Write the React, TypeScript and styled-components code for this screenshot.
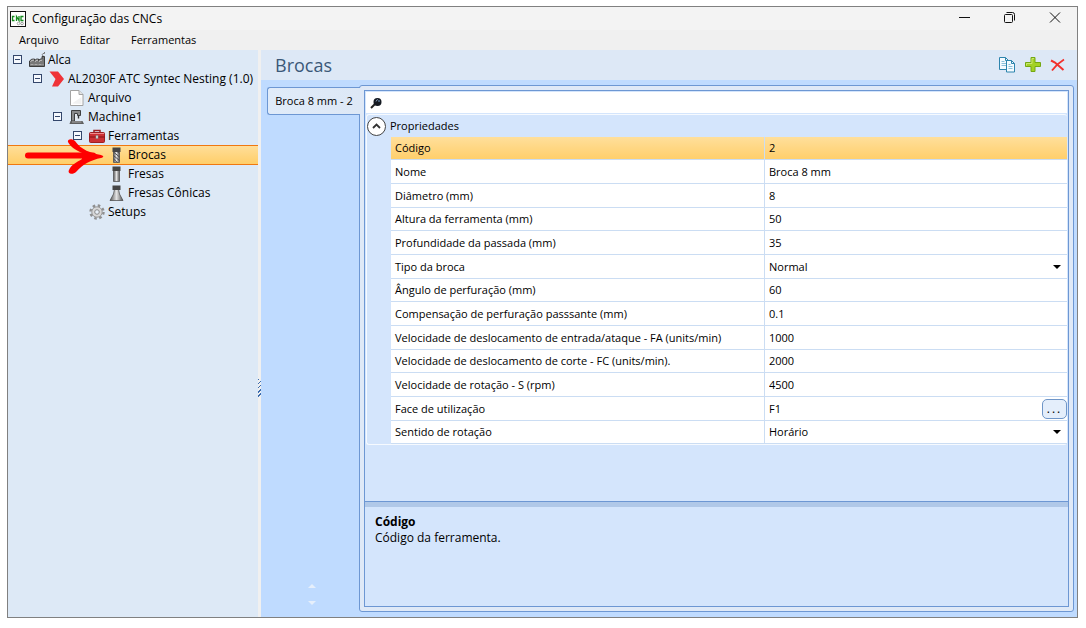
import React, { useState } from "react";
import styled, { createGlobalStyle, css } from "styled-components";

const line = "#6d97d3";
const gridLine = "#cbddf3";
const highlight = "linear-gradient(#ffdf9b, #ffce69)";

const GlobalStyle = createGlobalStyle`
  * { box-sizing: border-box; }
  body {
    margin: 0;
    background: #fff;
    color: #000;
    font: 12px/16px "Open Sans", "Noto Sans", sans-serif;
  }
  button, input, select { font: inherit; color: inherit; }
  button { padding: 0; border: 0; background: none; }
  svg { display: block; flex: none; }
`;

const Page = styled.div`
  display: flex;
  min-height: 100vh;
  padding: 6px 8px 10px 7px;
`;

const Window = styled.div`
  flex: 1;
  display: flex;
  flex-direction: column;
  min-width: 0;
  border: 1px solid #808080;
  background: #f0f0f0;
`;

const TitleBar = styled.header`
  display: flex;
  align-items: center;
  height: 23px;
  padding: 0 16px 0 2px;
  gap: 6px;
  background: #f3f3f3;
`;

const WindowTitle = styled.h1`
  flex: 1;
  margin: 0;
  font-size: 12px;
  font-weight: 400;
`;

const WindowControls = styled.div`
  display: flex;
  gap: 34px;
  margin-top: -2px;
`;

const MenuBar = styled.nav`
  display: flex;
  height: 20px;
  padding: 0 11px;
  gap: 21px;
  font-size: 11px;
`;

const Body = styled.div`
  flex: 1;
  display: flex;
  min-height: 0;
`;

const Sidebar = styled.aside`
  position: relative;
  flex: none;
  width: 250px;
  background: #dde9f6;
`;

const Tree = styled.ul`
  margin: 0;
  padding: 0;
  list-style: none;
`;

const TreeRow = styled.li<{ $level: number; $selected?: boolean }>`
  display: flex;
  align-items: center;
  height: 19px;
  padding-left: ${(p) => 5 + p.$level * 20}px;
  white-space: nowrap;
  ${(p) =>
    p.$selected &&
    css`
      background: ${highlight};
      box-shadow: inset 0 1px #f07810, 0 1px #f07810;
    `}
`;

const Toggle = styled.button`
  width: 9px;
  height: 9px;
  border: 1px solid #33466b;
  background: linear-gradient(#33466b, #33466b) center / 5px 1px no-repeat #f4f8fd;
`;

const TogglePlaceholder = styled.span`
  width: 9px;
`;

const TreeIcon = styled.span`
  flex: none;
  width: 16px;
  margin: 0 3px 0 7px;
`;

const Pointer = styled.svg`
  position: absolute;
  left: 15px;
  top: 86px;
  pointer-events: none;
`;

const Splitter = styled.div`
  flex: none;
  width: 3px;
  display: flex;
  align-items: center;

  &::after {
    content: "";
    width: 3px;
    height: 18px;
    margin-top: 108px;
    background: repeating-linear-gradient(135deg, #3c6cae 0 1px, #f0f0f0 1px 3px);
  }
`;

const Content = styled.main`
  flex: 1;
  display: flex;
  flex-direction: column;
  min-width: 0;
  background: #bfdbff;
`;

const ContentHeader = styled.div`
  display: flex;
  align-items: center;
  justify-content: space-between;
  height: 30px;
  padding: 0 12px 0 14px;
  background: #dde8f6;
`;

const ContentTitle = styled.h2`
  margin: 0;
  font-size: 18px;
  line-height: 24px;
  font-weight: 400;
  color: #3b5878;
`;

const Actions = styled.div`
  display: flex;
  align-items: center;
  gap: 9px;
`;

const TabArea = styled.div`
  flex: 1;
  display: flex;
  padding: 5px 3px 5px 6px;
`;

const TabStrip = styled.div`
  flex: none;
  display: flex;
  flex-direction: column;
  justify-content: space-between;
  width: 93px;
  margin-right: -1px;
  padding: 2px 0 7px;
  z-index: 1;
`;

const Tab = styled.button`
  height: 28px;
  border: 1px solid ${line};
  border-right: 0;
  border-radius: 3px 0 0 3px;
  background: linear-gradient(90deg, #e0ebf9, #dde8f6);
  font-size: 11px;
  white-space: nowrap;
`;

const TabScroll = styled.div`
  display: flex;
  flex-direction: column;
  align-items: center;
  gap: 13px;
  padding-right: 3px;
`;

const TabPanel = styled.section`
  flex: 1;
  display: flex;
  min-width: 0;
  padding: 4px;
  border: 1px solid ${line};
  border-radius: 3px;
  background: #dfe9f7;
`;

const PropertyGrid = styled.div`
  flex: 1;
  display: flex;
  flex-direction: column;
  min-width: 0;
  border: 1px solid ${line};
  background: #d4e5fc;
  font-size: 11px;
`;

const SearchBar = styled.label`
  display: flex;
  align-items: center;
  height: 21px;
  margin: 1px;
  padding-left: 4px;
  gap: 4px;
  background: #fff;
`;

const SearchInput = styled.input`
  flex: 1;
  min-width: 0;
  padding: 0;
  border: 0;
  outline: 0;
  background: none;
`;

const Group = styled.div`
  margin: 0 1px;
  border: 1px solid #f6faff;
  border-right: 0;
  border-radius: 3px;
`;

const GroupHeader = styled.div`
  display: flex;
  align-items: center;
  height: 22px;
  gap: 4px;
`;

const CollapseButton = styled.button`
  display: grid;
  place-items: center;
  width: 19px;
  height: 19px;
  border: 1px solid #444;
  border-radius: 50%;
  background: #fff;
`;

const Indent = styled.div`
  padding-left: 24px;
`;

const Table = styled.table`
  width: 100%;
  border-collapse: separate;
  border-spacing: 0;
  table-layout: fixed;
`;

const Row = styled.tr<{ $selected?: boolean }>`
  height: 24px;
  background: ${(p) => (p.$selected ? highlight : "#fff")};

  &:nth-child(3n + 1) {
    height: 23px;
  }
`;

const NameCell = styled.th`
  width: 374px;
  padding: 0 4px;
  border-right: 1px solid ${gridLine};
  border-bottom: 1px solid ${gridLine};
  font-weight: 400;
  text-align: left;
  white-space: nowrap;
`;

const ValueCell = styled.td`
  padding: 0;
  border-bottom: 1px solid ${gridLine};
`;

const Editor = styled.div`
  display: flex;
  align-items: center;
  height: 20px;
  padding-left: 4px;
`;

const ValueInput = styled.input`
  flex: 1;
  min-width: 0;
  padding: 0;
  border: 0;
  outline: 0;
  background: none;
`;

const ValueSelect = styled.select`
  flex: 1;
  min-width: 0;
  height: 20px;
  padding: 0;
  border: 0;
  outline: 0;
  appearance: none;
  background: none;
`;

const DropArrow = styled.svg`
  margin: 0 6px 0 -14px;
  pointer-events: none;
`;

const MoreButton = styled.button`
  width: 25px;
  height: 20px;
  border: 1px solid #6f96c8;
  border-radius: 5px;
  background: #e4eefb;
  line-height: 16px;
  font-size: 12px;
  letter-spacing: 2px;
`;

const Description = styled.div`
  height: 105px;
  margin-top: auto;
  padding: 12px 10px;
  border-top: 1px solid ${line};
  box-shadow: inset 0 5px #b0c8e8;
  font-size: 12px;
`;

const DescriptionTitle = styled.h3`
  margin: 0;
  font-size: 12px;
  font-weight: 700;
`;

const DescriptionText = styled.p`
  margin: 0;
`;

const AppIcon = () => (
  <svg width="16" height="16" viewBox="0 0 16 16" aria-hidden="true">
    <rect x=".5" y=".5" width="15" height="15" fill="#fff" stroke="#111" />
    <path d="M4.500 5.500H2.500v4h2M6.500 10V5.500l2.500 4V5M13.500 5.500h-2.500v4h2.500" fill="none" stroke="#138a1d" strokeWidth="1.300" />
    <circle cx="8.500" cy="12.500" r="1.300" fill="none" stroke="#aaa" />
    <circle cx="12" cy="12.500" r="1.300" fill="none" stroke="#999" />
  </svg>
);

const FactoryIcon = () => (
  <svg width="17" height="16" viewBox="0 0 17 16" aria-hidden="true">
    <path d="M.5 14.500V9Q2.500 6.500 5.500 7v1.500Q7.500 6.500 9.500 7v1.500Q11 6.500 13 7V4.500h2.500v10z" fill="#777" stroke="#3c3c3c" />
    <path d="M1.500 9.500q1.500-1.500 3.500-1.500M6 9.500q1-1 3-1.500M10 9.500q1-1 3-1.500" stroke="#d0d0d0" fill="none" />
    <path d="M1.500 12.500h13" stroke="#aaa" strokeDasharray="3 1" />
    <path d="M14 4Q12.500 2.500 14 1.500h1.500V0" stroke="#777" fill="none" />
  </svg>
);

const BrandIcon = () => (
  <svg width="16" height="16" viewBox="0 0 16 16" aria-hidden="true">
    <path d="M.5.5h8.500l6 7.500-6 7.500H3L6.500 8z" fill="#ef3338" />
  </svg>
);

const FileIcon = () => (
  <svg width="16" height="16" viewBox="0 0 16 16" aria-hidden="true">
    <path d="M1.500.5h8.500l4 4v11h-12.500z" fill="#fff" stroke="#a3a3a3" />
    <path d="M10 .5v4h4" fill="#e4e4e4" stroke="#a3a3a3" />
    <path d="M3 13.500L12.500 7v7z" fill="#f1f1f1" />
  </svg>
);

const MachineIcon = () => (
  <svg width="16" height="16" viewBox="0 0 16 16" aria-hidden="true">
    <path d="M2.500 1.500h9v5h-3V4.500h-3v7.500h-3z" fill="#8b8b8b" stroke="#3f3f3f" />
    <path d="M6 5h2v2.500h3V11H6z" fill="#e4e9ef" />
    <path d="M9.500 6.500v3" stroke="#333" strokeWidth="1.400" />
    <path d="M1.500 12h12l1.500 3H.5z" fill="#5e5e5e" />
    <path d="M3 13h9.500" stroke="#aaa" />
  </svg>
);

const ToolboxIcon = () => (
  <svg width="16" height="16" viewBox="0 0 16 16" aria-hidden="true">
    <path d="M5 5V2.500h6V5" fill="none" stroke="#9c2024" strokeWidth="1.500" />
    <rect x=".5" y="4.500" width="15" height="10" rx="1" fill="#cc3035" stroke="#9c2024" />
    <path d="M1 5.500h14" stroke="#f08a8c" />
    <path d="M0 9h16" stroke="#8f191d" strokeWidth="1.200" />
    <path d="M7 7.500h2v3H7z" fill="#eee" stroke="#888" strokeWidth=".7" />
  </svg>
);

const ToolIcon = ({ kind }: { kind: "drill" | "mill" | "cone" }) => (
  <svg width="16" height="16" viewBox="0 0 16 16" aria-hidden="true">
    <defs>
      <linearGradient id={`steel-${kind}`}>
        <stop offset="0" stopColor="#555" />
        <stop offset=".5" stopColor="#e2e2e2" />
        <stop offset="1" stopColor="#555" />
      </linearGradient>
    </defs>
    {kind === "cone" ? (
      <path d="M5.500 4h4l1 5 3.500 6.500H1L4.500 9z" fill={`url(#steel-${kind})`} stroke="#444" strokeWidth=".7" />
    ) : (
      <path d="M4.500 4.500h6v11h-6z" fill={`url(#steel-${kind})`} stroke="#555" strokeWidth=".8" />
    )}
    {kind === "drill" && (
      <path d="M4.500 5l6 5M4.500 8.500l6 5M4.500 12l4 3.500M8 4.500l2.500 2" stroke="#444" strokeWidth=".9" />
    )}
    <path d="M3.500.5h8V5h-8z" fill="#454545" />
  </svg>
);

const GearIcon = () => (
  <svg width="16" height="16" viewBox="0 0 16 16" aria-hidden="true">
    <circle cx="8" cy="8" r="6.500" fill="none" stroke="#8f8f8f" strokeWidth="2.400" strokeDasharray="2.550 2.550" />
    <circle cx="8" cy="8" r="5.200" fill="#d8d8d8" stroke="#9a9a9a" />
    <circle cx="8" cy="8" r="2.300" fill="#e9f0f8" stroke="#8b8b8b" />
  </svg>
);

const CopyIcon = () => (
  <svg width="17" height="16" viewBox="0 0 17 16" aria-hidden="true">
    <path d="M.5.500h6l3 3v9h-9z" fill="#f5fbff" stroke="#2d84ad" />
    <path d="M6.500.5v3h3" fill="none" stroke="#2d84ad" />
    <path d="M2.500 4.500h3M2.500 6.500h5M2.500 8.500h5" stroke="#8cc0da" />
    <path d="M7.500 3.500h5l3 3v8.500h-8z" fill="#f5fbff" stroke="#2d84ad" />
    <path d="M12.500 3.500v3h3" fill="none" stroke="#2d84ad" />
    <path d="M9.500 7.500h2M9.500 9.500h4M9.500 11.500h4" stroke="#8cc0da" />
  </svg>
);

const AddIcon = () => (
  <svg width="16" height="16" viewBox="0 0 16 16" aria-hidden="true">
    <path d="M6 .5h4v5h5.500v4H10v5H6v-5H.5v-4H6z" fill="#a3d126" stroke="#74a813" />
    <path d="M7 6.500v-5h2M1.500 8.500v-2H7" fill="none" stroke="#c9e871" />
  </svg>
);

const DeleteIcon = () => (
  <svg width="15" height="14" viewBox="0 0 15 14" aria-hidden="true">
    <path d="M1 2.500L5 4.500 13.500 12" fill="none" stroke="#f2302c" strokeWidth="2" />
    <path d="M14 1.500C9 4.500 5 8.500 2 12.500" fill="none" stroke="#f2302c" strokeWidth="1.800" />
  </svg>
);

type TreeNode = {
  label: string;
  level: number;
  icon: React.ReactNode;
  expandable?: boolean;
};

const nodes: TreeNode[] = [
  { label: "Alca", level: 0, icon: <FactoryIcon />, expandable: true },
  { label: "AL2030F ATC Syntec Nesting (1.0)", level: 1, icon: <BrandIcon />, expandable: true },
  { label: "Arquivo", level: 2, icon: <FileIcon /> },
  { label: "Machine1", level: 2, icon: <MachineIcon />, expandable: true },
  { label: "Ferramentas", level: 3, icon: <ToolboxIcon />, expandable: true },
  { label: "Brocas", level: 4, icon: <ToolIcon kind="drill" /> },
  { label: "Fresas", level: 4, icon: <ToolIcon kind="mill" /> },
  { label: "Fresas Cônicas", level: 4, icon: <ToolIcon kind="cone" /> },
  { label: "Setups", level: 3, icon: <GearIcon /> },
];

type Property = { name: string; value: string; editor?: "select" | "dialog" };

const properties: Property[] = [
  { name: "Código", value: "2" },
  { name: "Nome", value: "Broca 8 mm" },
  { name: "Diâmetro (mm)", value: "8" },
  { name: "Altura da ferramenta (mm)", value: "50" },
  { name: "Profundidade da passada (mm)", value: "35" },
  { name: "Tipo da broca", value: "Normal", editor: "select" },
  { name: "Ângulo de perfuração (mm)", value: "60" },
  { name: "Compensação de perfuração passsante (mm)", value: "0.1" },
  { name: "Velocidade de deslocamento de entrada/ataque - FA (units/min)", value: "1000" },
  { name: "Velocidade de deslocamento de corte - FC (units/min).", value: "2000" },
  { name: "Velocidade de rotação - S (rpm)", value: "4500" },
  { name: "Face de utilização", value: "F1", editor: "dialog" },
  { name: "Sentido de rotação", value: "Horário", editor: "select" },
];

const PropertyRow = ({ property, index, selected, onSelect }: {
  property: Property;
  index: number;
  selected: boolean;
  onSelect: () => void;
}) => {
  const id = `property-${index}`;
  return (
    <Row $selected={selected} onClick={onSelect}>
      <NameCell scope="row">
        <label htmlFor={id}>{property.name}</label>
      </NameCell>
      <ValueCell>
        <Editor>
          {property.editor === "select" ? (
            <>
              <ValueSelect id={id} defaultValue={property.value}>
                <option>{property.value}</option>
              </ValueSelect>
              <DropArrow width="8" height="4" viewBox="0 0 8 4" aria-hidden="true">
                <path d="M0 0h8L4 4z" fill="#000" />
              </DropArrow>
            </>
          ) : (
            <ValueInput id={id} defaultValue={property.value} />
          )}
          {property.editor === "dialog" && <MoreButton type="button">...</MoreButton>}
        </Editor>
      </ValueCell>
    </Row>
  );
};

export default function App() {
  const [selectedNode, setSelectedNode] = useState("Brocas");
  const [selectedRow, setSelectedRow] = useState(0);

  return (
    <>
      <GlobalStyle />
      <Page>
        <Window>
          <TitleBar>
            <AppIcon />
            <WindowTitle>Configuração das CNCs</WindowTitle>
            <WindowControls>
              <button type="button" aria-label="Minimizar">
                <svg width="11" height="11" viewBox="0 0 11 11"><path d="M0 5.500h11" stroke="#111" /></svg>
              </button>
              <button type="button" aria-label="Restaurar">
                <svg width="11" height="11" viewBox="0 0 11 11" fill="none" stroke="#111">
                  <rect x=".5" y="2.500" width="8" height="8" rx="1" />
                  <path d="M2.500.5h6a2 2 0 0 1 2 2v6" />
                </svg>
              </button>
              <button type="button" aria-label="Fechar">
                <svg width="12" height="11" viewBox="0 0 12 11"><path d="M1 .5l10 10M11 .5l-10 10" stroke="#111" /></svg>
              </button>
            </WindowControls>
          </TitleBar>
          <MenuBar>
            <button type="button">Arquivo</button>
            <button type="button">Editar</button>
            <button type="button">Ferramentas</button>
          </MenuBar>
          <Body>
            <Sidebar>
              <Tree>
                {nodes.map((node) => (
                  <TreeRow
                    key={node.label + node.level}
                    $level={node.level}
                    $selected={node.label === selectedNode}
                    onClick={() => setSelectedNode(node.label)}
                  >
                    {node.expandable ? (
                      <Toggle type="button" aria-label={`Recolher ${node.label}`} />
                    ) : (
                      <TogglePlaceholder />
                    )}
                    <TreeIcon>{node.icon}</TreeIcon>
                    {node.label}
                  </TreeRow>
                ))}
              </Tree>
              <Pointer width="82" height="40" viewBox="0 0 82 40" aria-hidden="true">
                <path d="M5 19.500L70 19.500" stroke="#f00" strokeWidth="6" strokeLinecap="round" />
                <path
                  d="M45 6C44 3 49 2 52 5C58 14 68 17 78 19C81 20 81 21 78 22C68 24 60 28 53 36C50 39 44 38 46 34C48 29 54 26 59 23V17C52 14 47 10 45 6z"
                  fill="#f00"
                />
              </Pointer>
            </Sidebar>
            <Splitter />
            <Content>
              <ContentHeader>
                <ContentTitle>Brocas</ContentTitle>
                <Actions>
                  <button type="button" aria-label="Copiar"><CopyIcon /></button>
                  <button type="button" aria-label="Adicionar"><AddIcon /></button>
                  <button type="button" aria-label="Excluir"><DeleteIcon /></button>
                </Actions>
              </ContentHeader>
              <TabArea>
                <TabStrip>
                  <Tab type="button">Broca 8 mm - 2</Tab>
                  <TabScroll>
                    <button type="button" aria-label="Anterior">
                      <svg width="8" height="4" viewBox="0 0 8 4"><path d="M0 4L4 0l4 4z" fill="#e6effb" /></svg>
                    </button>
                    <button type="button" aria-label="Próximo">
                      <svg width="8" height="4" viewBox="0 0 8 4"><path d="M0 0h8L4 4z" fill="#e6effb" /></svg>
                    </button>
                  </TabScroll>
                </TabStrip>
                <TabPanel>
                  <PropertyGrid>
                    <SearchBar>
                      <svg width="12" height="12" viewBox="0 0 12 12" aria-hidden="true">
                        <path d="M1 11l4-4" stroke="#222" strokeWidth="2" />
                        <circle cx="7.500" cy="5" r="4" fill="#151a22" />
                        <path d="M6 4.500q.5-2 2-2" stroke="#7d8fa8" fill="none" />
                        <circle cx="9" cy="4" r="1" fill="#54708f" />
                      </svg>
                      <SearchInput aria-label="Pesquisar propriedades" />
                    </SearchBar>
                    <Group>
                      <GroupHeader>
                        <CollapseButton type="button" aria-label="Recolher Propriedades">
                          <svg width="9" height="6" viewBox="0 0 9 6">
                            <path d="M1 5l3.500-3.500L8 5" fill="none" stroke="#333" strokeWidth="1.800" />
                          </svg>
                        </CollapseButton>
                        Propriedades
                      </GroupHeader>
                      <Indent>
                        <Table>
                          <tbody>
                            {properties.map((property, index) => (
                              <PropertyRow
                                key={property.name}
                                property={property}
                                index={index}
                                selected={index === selectedRow}
                                onSelect={() => setSelectedRow(index)}
                              />
                            ))}
                          </tbody>
                        </Table>
                      </Indent>
                    </Group>
                    <Description>
                      <DescriptionTitle>Código</DescriptionTitle>
                      <DescriptionText>Código da ferramenta.</DescriptionText>
                    </Description>
                  </PropertyGrid>
                </TabPanel>
              </TabArea>
            </Content>
          </Body>
        </Window>
      </Page>
    </>
  );
}
